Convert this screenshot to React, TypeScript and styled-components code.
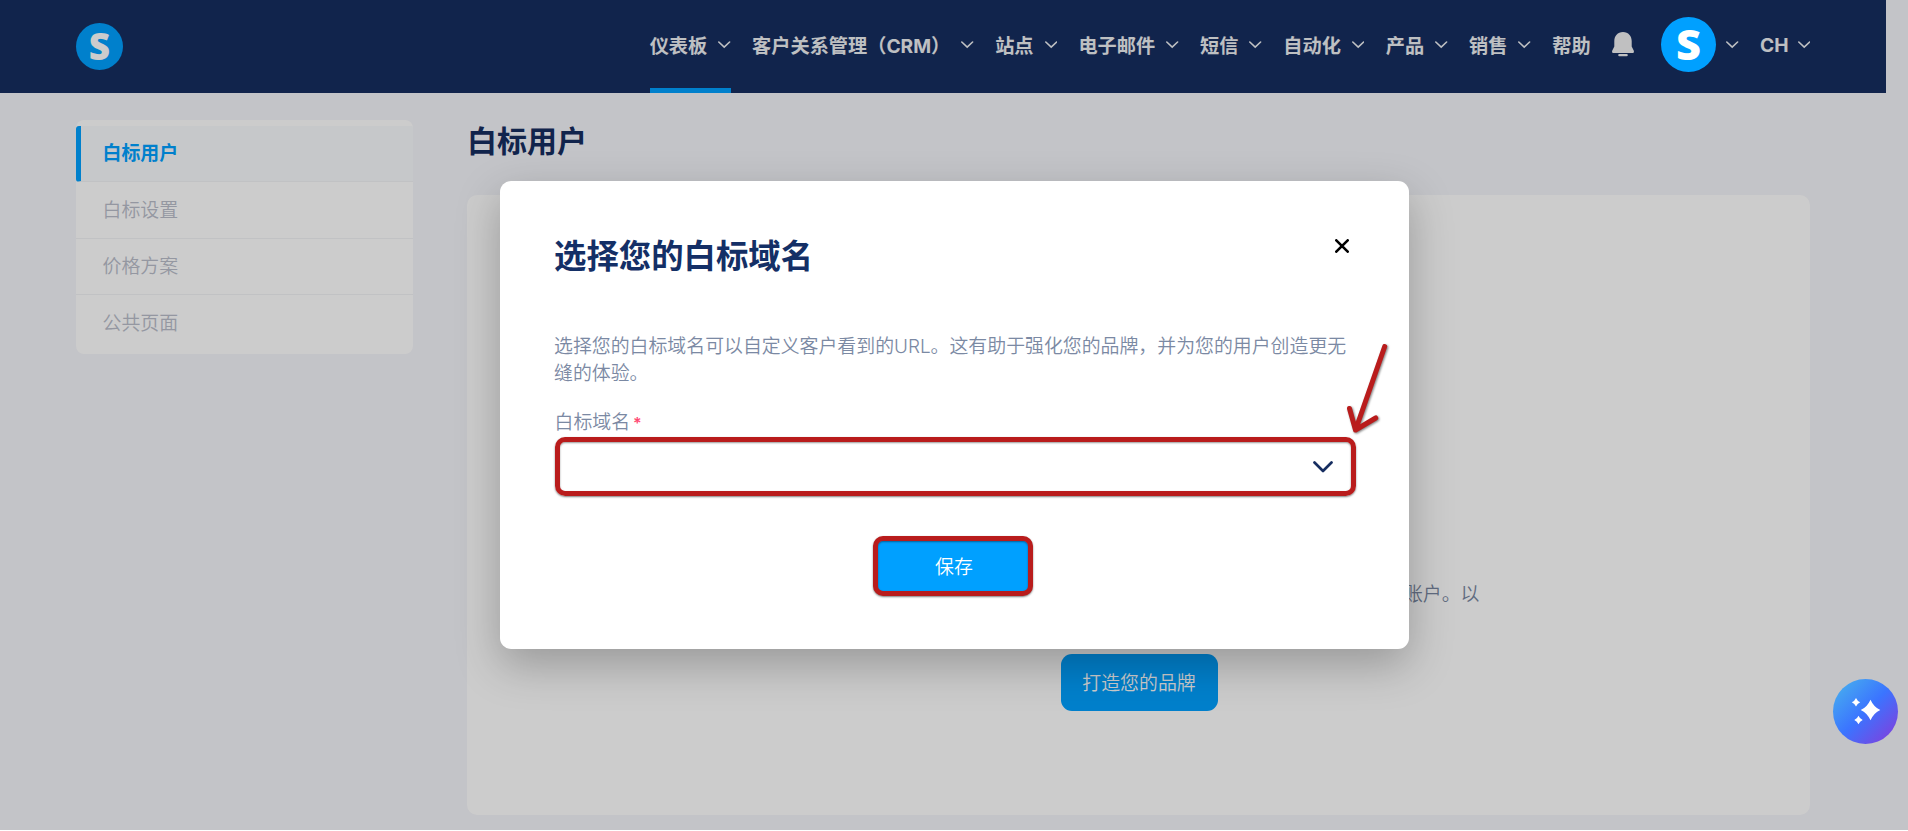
import React from 'react'
import styled, {createGlobalStyle, css} from 'styled-components'

const GlobalStyle = createGlobalStyle`
  * {
    box-sizing: border-box;
  }

  body {
    margin: 0;
    background: #fff;
    overflow: hidden;
  }
`

const bodyFont = css`
  font-family: 'Inter', 'Noto Sans CJK SC', sans-serif;
  font-size: 18.9px;
  font-weight: 350;
`

const Page = styled.div`
  ${bodyFont};
  position: relative;
  height: 830px;
  background: #f4f5fa;
  overflow: hidden;
`

const Header = styled.header`
  display: flex;
  align-items: center;
  justify-content: space-between;
  width: 1886px;
  height: 93px;
  padding: 0 76px;
  background: #162d60;
`

const LogoLink = styled.a`
  display: flex;
`

const Nav = styled.nav`
  display: flex;
  height: 93px;
`

const NavItem = styled.a<{$active?: boolean; $latin?: boolean}>`
  display: flex;
  align-items: center;
  gap: ${({$latin}) => ($latin ? 9 : 11)}px;
  margin-right: 21.5px;
  padding-bottom: 4px;
  font-size: 19.2px;
  font-weight: 700;
  color: #eef0f3;
  white-space: nowrap;
  box-shadow: ${({$active}) => ($active ? 'inset 0 -5px 0 #00a0ff' : 'none')};

  &:last-child {
    margin-right: 0;
  }
`

const BellHolder = styled.span`
  display: flex;
  align-items: center;
  margin-right: 27px;
  padding-bottom: 5px;
`

// Stays above the backdrop
const Avatar = styled.span`
  position: relative;
  z-index: 3;
  display: flex;
  align-items: center;
  margin-right: 10px;
  padding-bottom: 5px;
`

const Columns = styled.div`
  display: flex;
  align-items: flex-start;
  gap: 54px;
  padding: 27px 0 0 76px;
`

const Sidebar = styled.ul`
  width: 337px;
  height: 234px;
  margin: 0;
  padding: 6px 0 0;
  list-style: none;
  background: #fff;
  border-radius: 8px;
  overflow: hidden;
`

const SidebarItem = styled.li<{$active?: boolean}>`
  display: flex;
  align-items: center;
  height: 56.4px;
  padding: 0 0 4px 26.5px;
  border-bottom: 1px solid #f2f3f5;
  color: #b9bdca;

  &:last-child {
    border-bottom: none;
  }

  ${({$active}) =>
    $active &&
    css`
      padding-left: 21.5px;
      border-left: 5px solid #00a0ff;
      border-radius: 3px 0 0 3px;
      background: #f8fbfd;
      color: #00a0ff;
      font-weight: 700;
    `}
`

const Main = styled.main`
  width: 1343px;
`

const PageTitle = styled.h1`
  height: 75px;
  margin: 0;
  font-size: 30px;
  font-weight: 700;
  line-height: 43px;
  color: #162d60;
`

const Card = styled.section`
  display: flex;
  flex-direction: column;
  align-items: center;
  height: 620px;
  padding-top: 386px;
  border-radius: 10px;
  background: #fff;
`

const CardText = styled.p`
  width: 682px;
  height: 73px;
  margin: 0;
  line-height: 27px;
  text-align: right;
  color: #7886a0;
`

const BrandButton = styled.button`
  ${bodyFont};
  width: 157px;
  height: 57px;
  margin-left: 1px;
  padding: 0 0 2px;
  border: none;
  border-radius: 11px;
  background: #00a0ff;
  color: #fff;
`

const Backdrop = styled.div`
  position: absolute;
  inset: 0;
  z-index: 2;
  background: rgba(0, 0, 0, 0.2);
`

const Modal = styled.div`
  position: absolute;
  top: 181px;
  left: 500px;
  z-index: 4;
  width: 909px;
  height: 468px;
  padding: 53px 53px 0 55px;
  border-radius: 11px;
  background: #fff;
  box-shadow: 0 16px 44px rgba(0, 0, 0, 0.25);
`

const ModalHead = styled.div`
  display: flex;
  justify-content: space-between;
  height: 99px;
`

const ModalTitle = styled.h2`
  margin: 0 0 0 -1px;
  font-size: 32.4px;
  font-weight: 700;
  line-height: 46px;
  color: #142f66;
`

const CloseButton = styled.button`
  display: flex;
  height: 14px;
  margin: 4.5px 7.5px 0 0;
  padding: 0;
  border: none;
  background: none;
`

const ModalText = styled.p`
  width: 800px;
  margin: 0 0 0 -1px;
  line-height: 27px;
  color: #7b89a3;
`

const FieldLabel = styled.label`
  display: block;
  height: 50px;
  margin-left: -0.5px;
  padding-top: 22px;
  line-height: 27px;
  color: #7b89a3;
`

const Required = styled.span`
  margin-left: 3px;
  font-size: 16px;
  font-weight: 600;
  color: #ff4b74;
`

const outline = css`
  border: 5px solid #b91c1c;
  box-shadow: 0 1px 2px rgba(0, 0, 0, 0.5), inset 0 1px 2px rgba(0, 0, 0, 0.4);
`

const Select = styled.div`
  ${outline};
  display: flex;
  align-items: center;
  justify-content: flex-end;
  height: 59px;
  padding: 1px 18px 0 0;
  border-radius: 10px;
`

const SaveButton = styled.button`
  ${bodyFont};
  ${outline};
  display: block;
  width: 160px;
  height: 60px;
  margin: 40px auto 0 318px;
  padding: 0 0 2px 2px;
  border-radius: 10px;
  background: #00a0ff;
  color: #fff;
`

const Arrow = styled.svg`
  position: absolute;
  top: 155px;
  left: 840px;
  filter: drop-shadow(1px 1px 1px rgba(0, 0, 0, 0.5));
`

const Assistant = styled.button`
  position: absolute;
  top: 679px;
  left: 1833px;
  z-index: 3;
  width: 65px;
  height: 65px;
  padding: 0;
  border: none;
  border-radius: 50%;
  background: linear-gradient(135deg, #47b0ee 5%, #3b74ff 50%, #8a38d8 100%);
`

const LogoSvg = styled.svg`
  overflow: visible;
`

const LogoLetter = styled.text`
  font-family: 'Open Sans', sans-serif;
  font-weight: 800;
  font-size: 37px;
`

const Logo: React.FC<{size: number}> = ({size}) => (
  <LogoSvg width={size} height={size} viewBox="0 0 47 47">
    <circle cx="23.5" cy="23.5" r="23.5" fill="#00a0ff" />
    <LogoLetter x="23.5" y="37" textAnchor="middle" fill="#fff">
      S
    </LogoLetter>
  </LogoSvg>
)

const Chevron: React.FC = () => (
  <svg width="12.4" height="8" viewBox="0 0 12.4 8" fill="none">
    <path d="M.8 1l5.4 5.2L11.6 1" stroke="#eef0f3" strokeWidth="1.6" strokeLinecap="round" />
  </svg>
)

const Bell: React.FC = () => (
  <svg width="22" height="25" viewBox="0 0 22 25" fill="#f0f1f2">
    <path d="M11 0C5.6 0 2.3 4 2.3 9v5.500L.3 18.600c-.6 1.500-.1 2.400 1.400 2.400h18.600c1.500 0 2-.9 1.400-2.400l-2-4.100V9c0-5-3.300-9-8.700-9z" />
    <rect x="6.2" y="21.9" width="9.6" height="2.4" rx="1.2" />
  </svg>
)

const navItems = [
  '仪表板',
  '客户关系管理（CRM）',
  '站点',
  '电子邮件',
  '短信',
  '自动化',
  '产品',
  '销售',
]

const sidebarItems = ['白标用户', '白标设置', '价格方案', '公共页面']

const App: React.FC = () => (
  <>
    <GlobalStyle />
    <Page>
      <Header>
        <LogoLink>
          <Logo size={47} />
        </LogoLink>
        <Nav>
          {navItems.map((label, i) => (
            <NavItem key={label} $active={i === 0}>
              {label}
              <Chevron />
            </NavItem>
          ))}
          <NavItem>帮助</NavItem>
          <BellHolder>
            <Bell />
          </BellHolder>
          <Avatar>
            <Logo size={55} />
          </Avatar>
          <NavItem>
            <Chevron />
          </NavItem>
          <NavItem $latin>
            CH
            <Chevron />
          </NavItem>
        </Nav>
      </Header>

      <Columns>
        <Sidebar>
          {sidebarItems.map((label, i) => (
            <SidebarItem key={label} $active={i === 0}>
              {label}
            </SidebarItem>
          ))}
        </Sidebar>
        <Main>
          <PageTitle>白标用户</PageTitle>
          <Card>
            <CardText>账户。以</CardText>
            <BrandButton>打造您的品牌</BrandButton>
          </Card>
        </Main>
      </Columns>

      <Backdrop />

      <Modal>
        <ModalHead>
          <ModalTitle>选择您的白标域名</ModalTitle>
          <CloseButton>
            <svg width="14" height="14" viewBox="0 0 14 14">
              <path d="M1.3 1.3l11.4 11.4M12.7 1.3L1.3 12.7" stroke="#000" strokeWidth="2.6" strokeLinecap="round" />
            </svg>
          </CloseButton>
        </ModalHead>
        <ModalText>
          选择您的白标域名可以自定义客户看到的URL。这有助于强化您的品牌，并为您的用户创造更无缝的体验。
        </ModalText>
        <FieldLabel>
          白标域名<Required>*</Required>
        </FieldLabel>
        <Select>
          <svg width="20" height="12" viewBox="0 0 20 12" fill="none">
            <path d="M1.5 1.5L10 10l8.5-8.5" stroke="#162d60" strokeWidth="2.7" strokeLinecap="round" strokeLinejoin="round" />
          </svg>
        </Select>
        <SaveButton>保存</SaveButton>
        <Arrow width="54" height="104" viewBox="0 0 54 104" fill="none">
          <path
            d="M44.7 10.5L15.5 94M9.5 72.5l6 21.5 20.200-12"
            stroke="#b91c1c"
            strokeWidth="5"
            strokeLinecap="round"
            strokeLinejoin="round"
          />
        </Arrow>
      </Modal>

      <Assistant>
        <svg width="65" height="65" viewBox="0 0 65 65" fill="#fff">
          <path d="M37.5 20.7q3.200 7.300 9.800 10.300-6.600 3-9.800 10.300-3.200-7.300-9.800-10.300 6.600-3 9.800-10.300z" />
          <path d="M23 19q1.300 3 4.200 4.300-2.900 1.300-4.200 4.300-1.300-3-4.200-4.300 2.900-1.300 4.200-4.300z" />
          <path d="M25.5 36.7q1.300 3 4.200 4.300-2.900 1.300-4.200 4.300-1.300-3-4.200-4.300 2.900-1.300 4.200-4.300z" />
        </svg>
      </Assistant>
    </Page>
  </>
)

export default App
